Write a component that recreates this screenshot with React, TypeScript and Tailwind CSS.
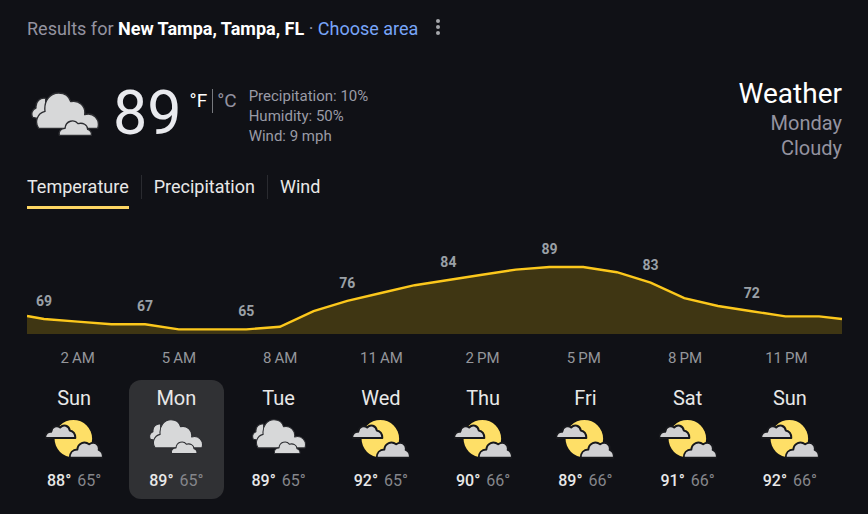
import { Fragment } from "react";

type Sky = "cloudy" | "partly";

const HOURLY = [69, 68, 67, 67, 65, 65, 65, 66, 72, 76, 79, 82, 84, 86, 88, 89, 89, 87, 83, 77, 74, 72, 70, 70, 69];
const HOUR_TICKS = ["2 AM", "5 AM", "8 AM", "11 AM", "2 PM", "5 PM", "8 PM", "11 PM"];
const TABS = ["Temperature", "Precipitation", "Wind"];

const DAYS: { name: string; sky: Sky; high: number; low: number }[] = [
  { name: "Sun", sky: "partly", high: 88, low: 65 },
  { name: "Mon", sky: "cloudy", high: 89, low: 65 },
  { name: "Tue", sky: "cloudy", high: 89, low: 65 },
  { name: "Wed", sky: "partly", high: 92, low: 65 },
  { name: "Thu", sky: "partly", high: 90, low: 66 },
  { name: "Fri", sky: "partly", high: 89, low: 66 },
  { name: "Sat", sky: "partly", high: 91, low: 66 },
  { name: "Sun", sky: "partly", high: 92, low: 66 },
];

function CloudyIcon({ className }: { className: string }) {
  return (
    <svg viewBox="0 0 204 132" className={className} role="img" aria-label="Cloudy">
      <g fill="#d7d8d9" stroke="#2c2d31" strokeWidth="4" strokeLinejoin="round">
        <path d="M5 76 C-1 64 4 52 15 48 C13 28 28 16 44 19 L44 60 L22 80 Z" />
        <path d="M23 109 C10 90 18 64 42 58 C38 26 58 3 83 3 C103 3 115 15 119 29 C144 23 165 43 161 68 C186 60 209 82 200 109 Z" />
        <path d="M85 130 C82 118 90 109 102 109 C104 86 130 80 141 95 C156 91 169 98 170 112 C178 114 183 122 181 130 Z" />
      </g>
    </svg>
  );
}

function PartlyCloudyIcon({ className }: { className: string }) {
  return (
    <svg viewBox="0 0 176 120" className={className} role="img" aria-label="Partly cloudy">
      <circle cx="86" cy="59" r="57" fill="#fedf67" />
      <g fill="#d0d0d2" stroke="#17181c" strokeWidth="6" strokeLinejoin="round">
        <path d="M0 57 C1 44 9 37 19 38 C21 22 36 17 46 25 C56 14 73 19 75 34 C87 36 92 45 92 57 Z" />
        <path d="M75 117 C75 102 84 92 98 92 C100 72 120 65 134 76 C150 65 166 76 163 93 C172 96 176 106 176 117 Z" />
      </g>
    </svg>
  );
}

function TemperatureChart() {
  const points = HOURLY.map((t, i) => {
    const x = i === HOURLY.length - 1 ? 815 : 17 + i * 33.7;
    return `${x},${68 - (t - 64) * 2.6}`;
  });
  const line = ["0,52", ...points].join(" ");
  return (
    <div className="relative">
      <svg viewBox="0 0 815 70" preserveAspectRatio="none" className="block h-[70px] w-full" aria-hidden="true">
        <polygon points={`${line} 815,70 0,70`} fill="#3f3613" />
        <polyline points={line} fill="none" stroke="#fcc81c" strokeWidth="2.4" />
      </svg>
      {HOURLY.map((t, i) =>
        i % 3 === 0 && i < 24 ? (
          <span
            key={i}
            className="absolute -translate-x-1/2 -translate-y-full text-sm leading-4 font-bold text-[#9aa0a6]"
            style={{ left: `${((17 + i * 33.7) / 815) * 100}%`, top: `${58 - (t - 64) * 2.6}px` }}
          >
            {t}
          </span>
        ) : null,
      )}
    </div>
  );
}

export default function App() {
  return (
    <main className="min-h-screen bg-[#101116] pt-[17px] pr-[26px] pb-3 pl-[27px] font-['Roboto',sans-serif] text-[#e8e8e8]">
      <div className="flex items-center gap-3 text-lg leading-6">
        <p className="text-[#9493a0]">
          Results for <strong className="font-bold text-white">New Tampa, Tampa, FL</strong> ·{" "}
          <a href="#area" className="text-[#78a5f9]">
            Choose area
          </a>
        </p>
        <button type="button" aria-label="More options" className="flex h-5 w-4 items-start justify-center">
          <svg viewBox="0 0 4 16" className="h-4 w-1" fill="#a5a7ab">
            <circle cx="2" cy="2" r="2" />
            <circle cx="2" cy="8" r="2" />
            <circle cx="2" cy="14" r="2" />
          </svg>
        </button>
      </div>

      <header className="mt-[35px] flex items-start">
        <CloudyIcon className="mt-4 ml-1 h-11 w-[68px]" />
        <div className="ml-[14px] text-[61px] leading-[74px] text-[#e9eaee]">89</div>
        <div className="mt-[13px] ml-2 flex text-[19px] leading-6">
          <button type="button" className="border-r border-[#77797e] pr-[5px] text-white">°F</button>
          <button type="button" className="pl-1 text-[#9493a0]">°C</button>
        </div>
        <div className="mt-[10px] ml-3 text-[15px] leading-5 text-[#9a9ba6]">
          <p>Precipitation: 10%</p>
          <p>Humidity: 50%</p>
          <p>Wind: 9 mph</p>
        </div>
        <div className="ml-auto text-right text-xl leading-[25px] text-[#9493a0]">
          <h1 className="text-[28px] leading-[35px] text-white">Weather</h1>
          <p>Monday</p>
          <p>Cloudy</p>
        </div>
      </header>

      <nav className="mt-[14px] flex items-start text-lg leading-6">
        {TABS.map((tab, i) => (
          <Fragment key={tab}>
            {i > 0 && <span className="mx-3 h-6 w-px bg-[#2a2b30]" />}
            <button
              type="button"
              className={`border-b-3 pb-[7px] ${i === 0 ? "border-[#fdd663]" : "border-transparent"}`}
            >
              {tab}
            </button>
          </Fragment>
        ))}
      </nav>

      <section className="mt-[55px]">
        <TemperatureChart />
        <div className="mt-3 grid grid-cols-8 pr-[5px] text-center text-[15px] leading-6 text-[#94969b]">
          {HOUR_TICKS.map((t) => (
            <span key={t}>{t.replace(" ", "\u2009")}</span>
          ))}
        </div>
      </section>

      <section className="mt-[10px] grid grid-cols-8 gap-2 pr-[5px]">
        {DAYS.map((d, i) => (
          <button
            type="button"
            key={i}
            className={`flex flex-col items-center rounded-xl pt-1 pb-[6px] ${i === 1 ? "bg-[#303134]" : ""}`}
          >
            <span className="text-xl leading-7">{d.name}</span>
            <span className="mt-[7px] flex h-10 items-start">
              {d.sky === "cloudy" ? (
                <CloudyIcon className="h-[35px] w-[54px]" />
              ) : (
                <PartlyCloudyIcon className="h-10 w-[58px]" />
              )}
            </span>
            <span className="mt-[10px] flex gap-[6px] text-base leading-6">
              <span className="font-medium">{d.high}°</span>
              <span className="text-[#85868b]">{d.low}°</span>
            </span>
          </button>
        ))}
      </section>
    </main>
  );
}
